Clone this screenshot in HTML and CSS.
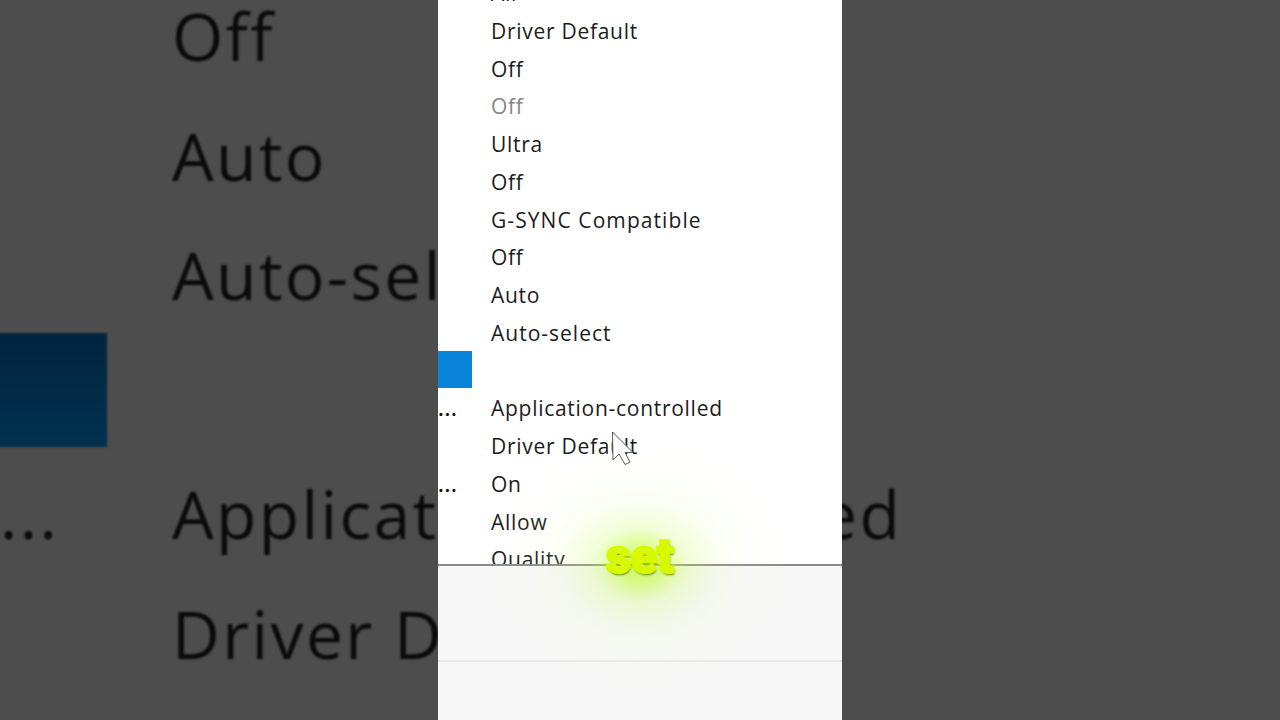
FILE: index.html
```html
<!DOCTYPE html>
<html lang="en">
<head>
<meta charset="utf-8">
<title>Settings</title>
<link rel="stylesheet" href="styles.css">
</head>
<body>
<div class="backdrop" aria-hidden="true">
  <div class="bg-row"><span class="bg-key"></span><span>Off</span></div>
  <div class="bg-row"><span class="bg-key"></span><span>Auto</span></div>
  <div class="bg-row"><span class="bg-key"></span><span>Auto-select</span></div>
  <div class="bg-row"><span class="bg-key"><i class="bg-sel"></i></span></div>
  <div class="bg-row"><span class="bg-key bg-dots">...</span><span>Application-controlled</span></div>
  <div class="bg-row"><span class="bg-key"></span><span>Driver Default</span></div>
</div>
<main class="panel">
  <div class="viewport">
    <ul class="list">
      <li class="row"><span class="key"></span><span>All</span></li>
      <li class="row"><span class="key"></span><span>Driver Default</span></li>
      <li class="row"><span class="key"></span><span>Off</span></li>
      <li class="row muted"><span class="key"></span><span>Off</span></li>
      <li class="row"><span class="key"></span><span>Ultra</span></li>
      <li class="row"><span class="key"></span><span>Off</span></li>
      <li class="row"><span class="key"></span><span class="caps">G-SYNC Compatible</span></li>
      <li class="row"><span class="key"></span><span>Off</span></li>
      <li class="row"><span class="key"></span><span>Auto</span></li>
      <li class="row"><span class="key"></span><span class="caps-lite">Auto-select</span></li>
      <li class="row"><span class="key"><i class="sel"></i></span></li>
      <li class="row"><span class="key dots">...</span><span>Application-controlled</span></li>
      <li class="row"><span class="key"></span><span>Driver Default</span></li>
      <li class="row"><span class="key dots">...</span><span>On</span></li>
      <li class="row"><span class="key"></span><span>Allow</span></li>
      <li class="row"><span class="key"></span><span>Quality</span></li>
    </ul>
  </div>
  <div class="foot foot-a"></div>
  <div class="foot foot-b"></div>
</main>
<svg class="cursor" width="26" height="38" viewBox="0 0 26 38" aria-hidden="true">
  <path d="M1.5 1 L2 29 L8 23 L14 33.5 L19 31 L14 21.5 L22 21.5 Z" fill="#fff" stroke="#555" stroke-width="1" stroke-linejoin="round"/>
</svg>
<div class="glow" aria-hidden="true"></div>
<div class="caption">set</div>
</body>
</html>
```
FILE: styles.css
```css
* { box-sizing: border-box; }
html, body { margin: 0; height: 100%; }
body {
  width: 1280px;
  height: 720px;
  overflow: hidden;
  background: #4d4d4d;
  display: flex;
  justify-content: center;
  font-family: "Open Sans", "Noto Sans", sans-serif;
}
.backdrop {
  position: absolute;
  left: 5px;
  top: -28px;
  width: 1275px;
  color: #0a0a0a;
  font-size: 66px;
  letter-spacing: 2.35px;
  filter: blur(.8px);
}
.bg-row {
  height: 119.5px;
  line-height: 126px;
  display: flex;
  white-space: nowrap;
}
.bg-key { width: 167px; flex: none; display: block; position: relative; }
.bg-sel {
  position: absolute;
  left: -10px;
  top: 2px;
  width: 112px;
  height: 114px;
  background: linear-gradient(#03243e, #003250);
}
.bg-dots { margin-left: -5px; width: 172px; color: #0b0b0b; }
.panel {
  position: relative;
  width: 404px;
  height: 720px;
  background: #fff;
  display: flex;
  flex-direction: column;
}
.viewport {
  height: 564px;
  flex: none;
  overflow: hidden;
}
.list {
  list-style: none;
  margin: -27px 0 0;
  padding: 0;
  font-size: 21px;
  letter-spacing: .72px;
  color: #1c1c1c;
}
.row {
  height: 37.75px;
  line-height: 41.75px;
  display: flex;
  white-space: nowrap;
}
.muted { color: #858585; }
.caps { letter-spacing: 1.08px; }
.caps-lite { letter-spacing: 1px; }
.key { width: 53px; flex: none; display: block; }
.sel {
  display: block;
  width: 34px;
  height: 37px;
  background: #0a84d8;
}
.dots { color: #111; font-weight: 600; line-height: 40px; }
.foot { background: #f7f7f7; flex: none; }
.foot-a { height: 96px; border-top: 2px solid #8b8b8b; }
.foot-b { flex: 1; border-top: 2px solid #e9e9e9; }
.cursor { position: absolute; left: 611px; top: 431px; }
.glow {
  position: absolute;
  left: 490px;
  top: 445px;
  width: 300px;
  height: 240px;
  background: radial-gradient(ellipse closest-side, rgba(180,250,30,.75) 0, rgba(190,250,50,.55) 15%, rgba(205,250,100,.25) 32%, rgba(225,250,160,.1) 55%, rgba(235,255,190,.04) 78%, rgba(235,255,190,0) 100%);
  pointer-events: none;
}
.caption {
  position: absolute;
  left: 520px;
  top: 532px;
  width: 240px;
  text-align: center;
  font-family: "Roboto", "Liberation Sans", sans-serif;
  font-weight: 900;
  font-size: 48px;
  line-height: 50px;
  color: #d6f900;
  -webkit-text-stroke: 2.5px #d6f900;
  text-shadow: 1px 2px 2px #5f7a00;
}
```
